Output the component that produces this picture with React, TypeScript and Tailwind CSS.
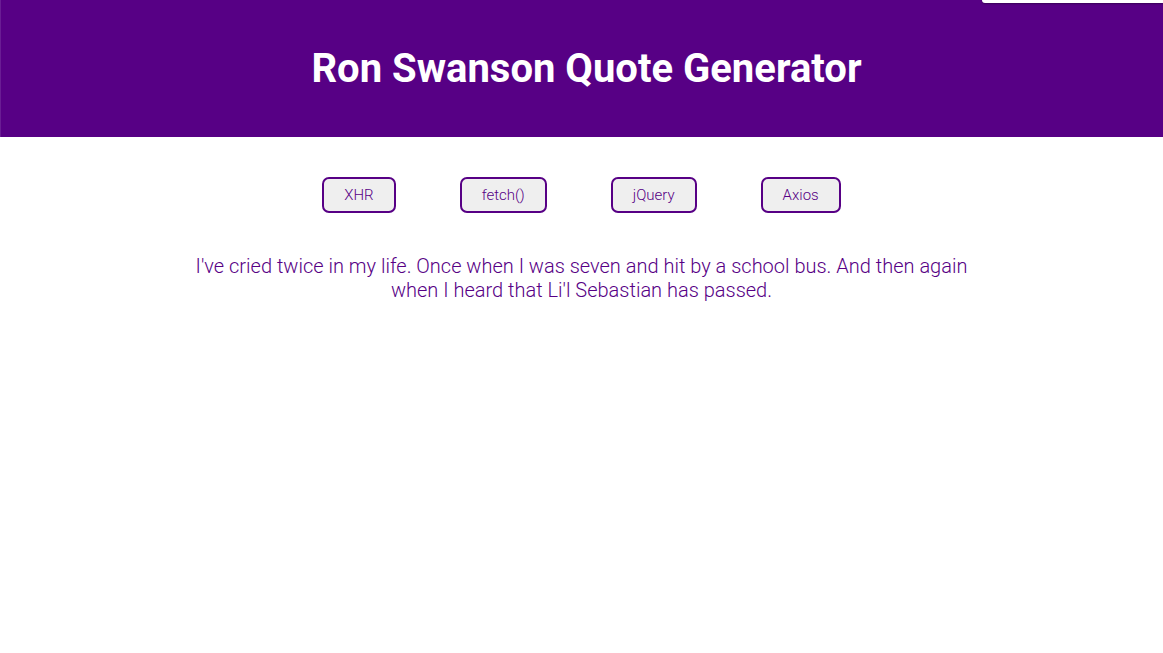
import React from "react";

export default function App() {
  const buttons = ["XHR", "fetch()", "jQuery", "Axios"];
  return (
    <div className="relative min-h-[653px] bg-white" style={{ fontFamily: "Roboto, 'Liberation Sans', sans-serif" }}>
      <div className="absolute right-0 top-0 h-[3px] w-[181px] rounded-bl-[6px] bg-white shadow-[0_1px_2px_rgba(0,0,0,0.35)]" />
      <header className="flex h-[137px] items-center justify-center border-l border-[#6a1d94] bg-[#570085] pl-[9px]">
        <h1 className="text-[40px] font-bold leading-none text-white">Ron Swanson Quote Generator</h1>
      </header>
      <div className="flex justify-center pt-10">
        {buttons.map((b) => (
          <button
            key={b}
            className="mx-8 h-9 rounded-[7px] border-2 border-[#570085] bg-[#efefef] px-5 text-[15px] font-light text-[#570085]"
          >
            {b}
          </button>
        ))}
      </div>
      <p className="mx-auto mt-[41px] w-[800px] text-center text-[20px] font-light leading-6 text-[#570085]">
        I've cried twice in my life. Once when I was seven and hit by a school bus. And then again when I heard that Li'l Sebastian has passed.
      </p>
    </div>
  );
}
